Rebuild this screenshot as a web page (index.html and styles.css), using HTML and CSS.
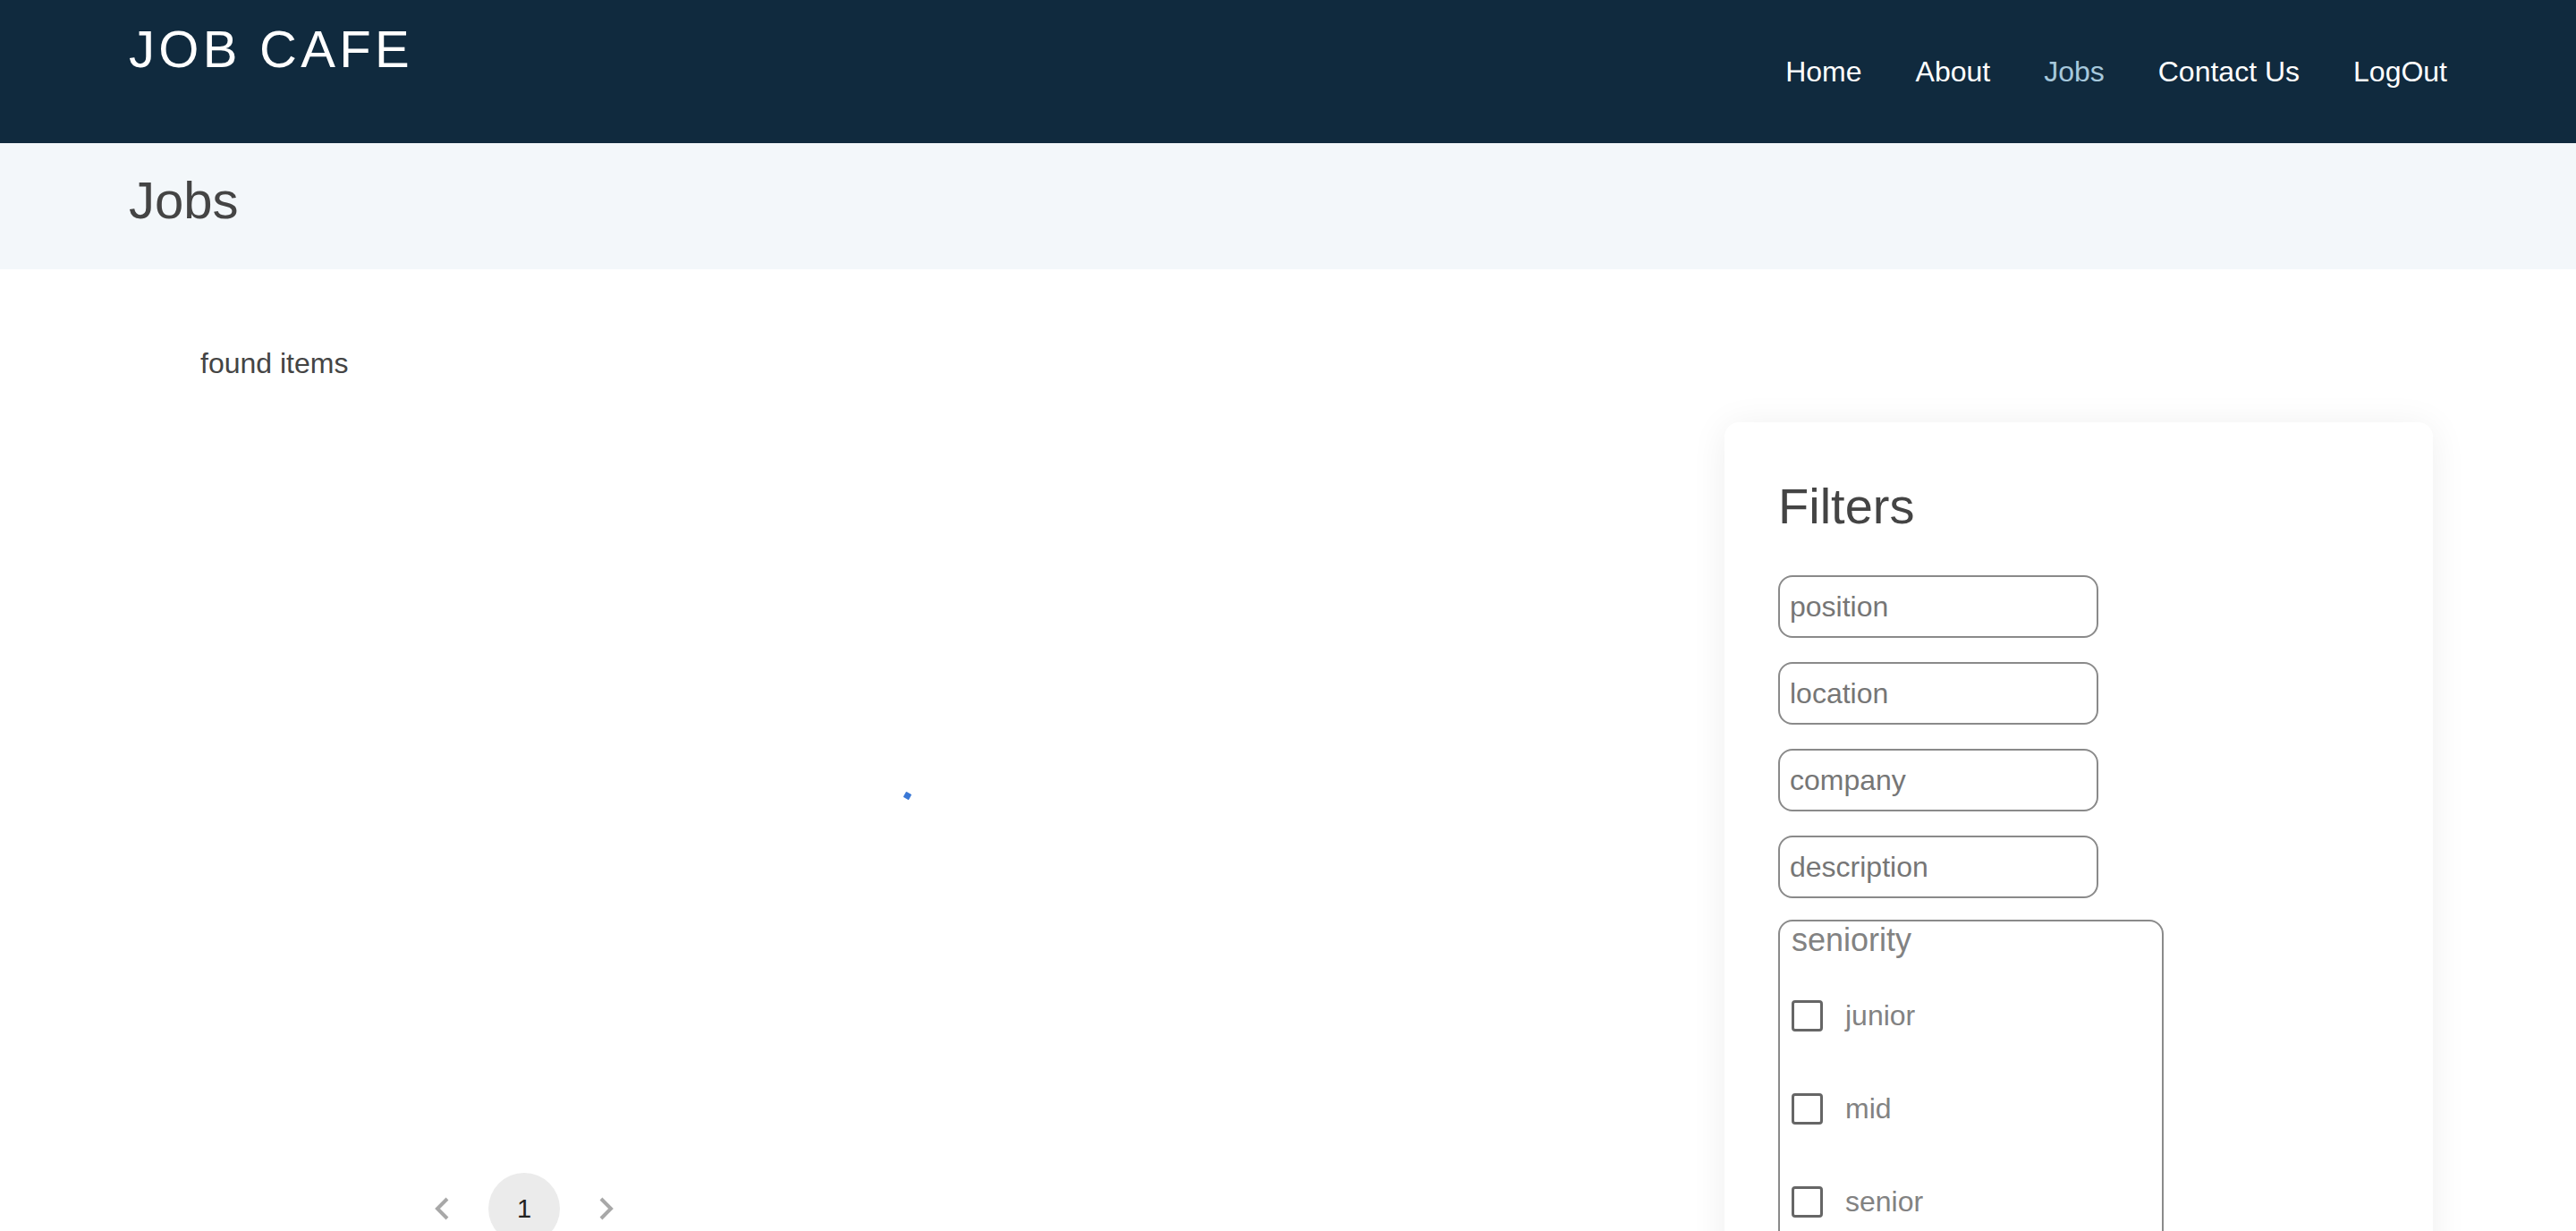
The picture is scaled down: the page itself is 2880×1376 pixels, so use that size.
FILE: index.html
```html
<!DOCTYPE html>
<html lang="en">
<head>
<meta charset="utf-8">
<title>Job Cafe - Jobs</title>
<link rel="stylesheet" href="styles.css">
</head>
<body>
<header class="topbar">
  <div class="logo">JOB CAFE</div>
  <nav class="nav">
    <a class="nav-link" href="#">Home</a>
    <a class="nav-link" href="#">About</a>
    <a class="nav-link active" href="#">Jobs</a>
    <a class="nav-link" href="#">Contact Us</a>
    <a class="nav-link" href="#">LogOut</a>
  </nav>
</header>
<section class="banner">
  <h1 class="banner-title">Jobs</h1>
</section>
<main class="content">
  <div class="results">
    <p class="found">found items</p>
    <div class="list-area">
      <span class="spinner"></span>
    </div>
    <div class="pagination">
      <button class="page-arrow" aria-label="previous">
        <svg width="18" height="26" viewBox="0 0 18 26"><polyline points="15,2 4,13 15,24" fill="none" stroke="#a8a8a8" stroke-width="4"/></svg>
      </button>
      <button class="page-num">1</button>
      <button class="page-arrow" aria-label="next">
        <svg width="18" height="26" viewBox="0 0 18 26"><polyline points="3,2 14,13 3,24" fill="none" stroke="#a8a8a8" stroke-width="4"/></svg>
      </button>
    </div>
  </div>
  <aside class="filters">
    <h2 class="filters-title">Filters</h2>
    <div class="fields">
      <input class="field" type="text" placeholder="position">
      <input class="field" type="text" placeholder="location">
      <input class="field" type="text" placeholder="company">
      <input class="field" type="text" placeholder="description">
      <div class="group">
        <div class="group-label">seniority</div>
        <label class="check-row"><span class="box"></span><span class="check-text">junior</span></label>
        <label class="check-row"><span class="box"></span><span class="check-text">mid</span></label>
        <label class="check-row"><span class="box"></span><span class="check-text">senior</span></label>
      </div>
    </div>
  </aside>
</main>
</body>
</html>
```

FILE: styles.css
```css
* { box-sizing: border-box; }
html, body { margin: 0; padding: 0; }
body {
  font-family: "Liberation Sans", Arial, Helvetica, sans-serif;
  background: #ffffff;
  color: #444444;
}

.topbar {
  height: 160px;
  background: #102a3e;
  display: flex;
  justify-content: space-between;
  align-items: center;
  padding: 0 144px;
}
.logo {
  align-self: flex-start;
  margin-top: 21px;
  color: #ffffff;
  font-size: 58px;
  letter-spacing: 4.3px;
  line-height: normal;
}
.nav {
  display: flex;
  gap: 60px;
  margin-top: 0;
}
.nav-link {
  color: #ffffff;
  text-decoration: none;
  font-size: 32px;
}
.nav-link.active { color: #a6c8dc; }

.banner {
  height: 141px;
  background: #f3f7fa;
  display: flex;
  align-items: center;
  padding: 0 144px;
}
.banner-title {
  margin: 0;
  font-weight: normal;
  font-size: 58px;
  color: #444444;
  line-height: 1;
  padding-bottom: 14px;
}

.content {
  display: flex;
  gap: 44px;
  padding: 0 160px 0 144px;
}
.results {
  width: 1740px;
  flex: none;
  padding-top: 87px;
  display: flex;
  flex-direction: column;
}
.found {
  margin: 0 0 0 80px;
  font-size: 32px;
  line-height: 37px;
  color: #444444;
}
.list-area {
  height: 886px;
  display: flex;
  justify-content: center;
  padding-top: 461px;
}
.spinner {
  width: 7px;
  height: 7px;
  background: #3a78d6;
  border-radius: 1px;
  transform: rotate(30deg);
}
.pagination {
  display: flex;
  gap: 12px;
  margin-left: 310px;
}
.page-arrow, .page-num {
  width: 80px;
  height: 80px;
  border: none;
  background: transparent;
  display: flex;
  align-items: center;
  justify-content: center;
  padding: 0;
  font-family: inherit;
}
.page-num {
  border-radius: 50%;
  background: #ebebeb;
  font-size: 29px;
  color: #222222;
}

.filters {
  width: 792px;
  flex: none;
  margin-top: 171px;
  background: #ffffff;
  border-radius: 16px;
  box-shadow: 0 4px 40px rgba(0, 0, 0, 0.07);
  padding: 62px 60px 60px 60px;
  min-height: 1000px;
}
.filters-title {
  margin: 0 0 46px 0;
  font-weight: normal;
  font-size: 56px;
  line-height: 63px;
  color: #444444;
}
.fields {
  display: flex;
  flex-direction: column;
  align-items: flex-start;
  gap: 27px;
}
.field {
  width: 358px;
  height: 70px;
  border: 2px solid #8a8a8a;
  border-radius: 16px;
  padding: 0 11px;
  font-family: inherit;
  font-size: 32px;
  color: #333333;
  background: #ffffff;
  outline: none;
}
.field::placeholder { color: #767676; }

.group {
  margin-top: -3px;
  width: 431px;
  border: 2px solid #8a8a8a;
  border-radius: 16px;
  padding: 0 11px 20px 13px;
}
.group-label {
  font-size: 36px;
  line-height: 41px;
  color: #828282;
  margin-bottom: 12px;
}
.check-row {
  height: 104px;
  display: flex;
  align-items: center;
  gap: 25px;
}
.box {
  width: 35px;
  height: 35px;
  border: 3px solid #666666;
  border-radius: 4px;
  background: #ffffff;
  flex: none;
}
.check-text {
  font-size: 32px;
  color: #828282;
}
```
